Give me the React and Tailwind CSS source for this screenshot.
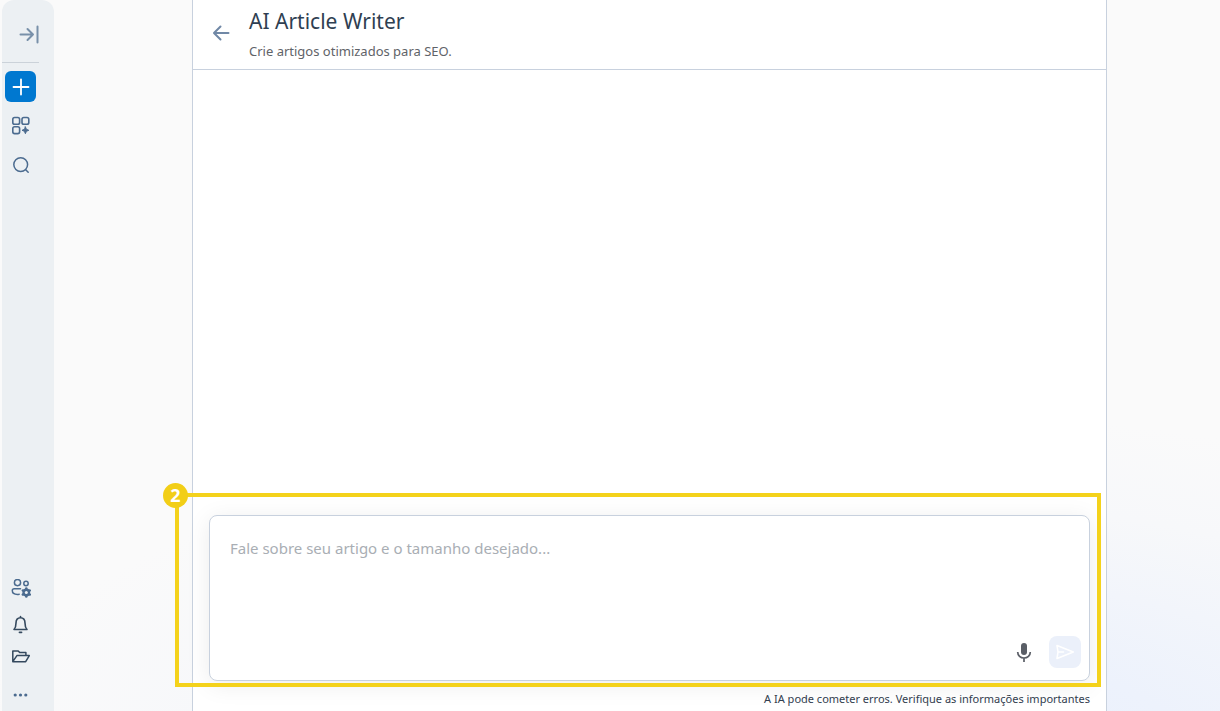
import { useState } from 'react';

const Icon = ({ children, className = 'size-5', viewBox = '0 0 20 20', strokeWidth = 1.5 }) => (
  <svg
    className={className}
    viewBox={viewBox}
    fill="none"
    stroke="currentColor"
    strokeWidth={strokeWidth}
    strokeLinecap="round"
    strokeLinejoin="round"
    aria-hidden="true"
  >
    {children}
  </svg>
);

const ExpandIcon = () => (
  <Icon strokeWidth={2}>
    <path d="M1.5 10.500h12.500M8.500 5l5.500 5.500L8.500 16M18.500 2.500v16" />
  </Icon>
);

const AppsIcon = () => (
  <Icon strokeWidth={1.6}>
    <rect x="1.800" y="1.500" width="6.800" height="6.800" rx="1.800" />
    <rect x="11" y="1.500" width="6.800" height="6.800" rx="1.800" />
    <rect x="1.800" y="10.800" width="6.800" height="6.800" rx="1.800" />
    <path d="M14.400 10.900l1 2.400 2.400 1-2.400 1-1 2.400-1-2.400-2.400-1 2.400-1z" fill="currentColor" strokeWidth="1" />
  </Icon>
);

const SearchIcon = () => (
  <Icon>
    <circle cx="9.700" cy="8.600" r="6.900" />
    <path d="M14.700 13.700l2.500 2.600" />
  </Icon>
);

const TeamIcon = () => (
  <Icon>
    <circle cx="6.500" cy="3.600" r="3.100" />
    <circle cx="15" cy="4.500" r="2.200" />
    <path d="M9.500 9.700H3.200c-1.200 0-1.900.7-1.900 1.800 0 2.600 2.200 3.900 5.200 3.900.6 0 1.200-.1 1.700-.2" />
    <path
      d="M15.300 9.600v7.800M11.900 11.500l6.800 4M18.700 11.500l-6.800 4"
      strokeWidth="2.600"
    />
    <circle cx="15.300" cy="13.500" r="2.700" strokeWidth="2.400" />
    <circle cx="15.300" cy="13.500" r="1.500" fill="#ecf0f3" stroke="none" />
  </Icon>
);

const BellIcon = () => (
  <Icon strokeWidth={1.6}>
    <path d="M9.500 1.500v1M3 14.500c1.500-1.500 2-3.200 2-6.500 0-3.400 1.800-5.300 4.500-5.300S14 4.600 14 8c0 3.300.5 5 2 6.500z" />
    <path d="M8.500 17.300h2" strokeWidth="1.800" />
  </Icon>
);

const FolderIcon = () => (
  <Icon>
    <path d="M1.800 14.700V3.900h5.400l1.500 1.700h6.200v3M1.800 14.700h12.900l3.600-6.100H5.900z" />
  </Icon>
);

const MoreIcon = () => (
  <Icon>
    <g fill="currentColor" stroke="none">
      <circle cx="4.200" cy="10" r="1.600" />
      <circle cx="9.500" cy="10" r="1.600" />
      <circle cx="14.800" cy="10" r="1.600" />
    </g>
  </Icon>
);

function Sidebar() {
  return (
    <aside className="ml-0.5 flex w-[52px] shrink-0 flex-col rounded-t-xl bg-[#ecf0f3] text-[#4b6b8f]">
      <div className="flex w-[37px] items-center justify-end border-b border-[#cbd2d9] pt-6 pb-[18px]">
        <button type="button" aria-label="Expandir menu" className="text-[#7890a9]">
          <ExpandIcon />
        </button>
      </div>

      <nav className="flex w-[37px] flex-1 flex-col items-center pt-2 pb-1.5">
        <button
          type="button"
          aria-label="Novo"
          className="flex size-[31px] items-center justify-center rounded-md bg-[#0078d0] text-white"
        >
          <Icon strokeWidth={1.800}>
            <path d="M10 2.500v15M2.500 10h15" />
          </Icon>
        </button>
        <button type="button" aria-label="Aplicativos" className="mt-3.5">
          <AppsIcon />
        </button>
        <button type="button" aria-label="Buscar" className="mt-5">
          <SearchIcon />
        </button>

        <button type="button" aria-label="Equipe" className="mt-auto">
          <TeamIcon />
        </button>
        <button type="button" aria-label="Notificações" className="mt-4 text-[#34495e]">
          <BellIcon />
        </button>
        <button type="button" aria-label="Arquivos" className="mt-3 text-[#34495e]">
          <FolderIcon />
        </button>
        <button type="button" aria-label="Mais" className="mt-[18px]">
          <MoreIcon />
        </button>
      </nav>
    </aside>
  );
}

function Composer() {
  const [prompt, setPrompt] = useState('');

  return (
    <form className="relative" onSubmit={(e) => e.preventDefault()}>
      <div className="flex h-[166px] flex-col rounded-lg border border-[#c8d1de] bg-white pt-5 pr-2 pb-3 pl-5 shadow-[0_4px_24px_rgba(0,0,0,0.08)]">
        <textarea
          aria-label="Fale sobre seu artigo"
          placeholder="Fale sobre seu artigo e o tamanho desejado..."
          value={prompt}
          onChange={(e) => setPrompt(e.target.value)}
          className="w-full flex-1 resize-none text-[15px] leading-6 text-[#2c3e50] outline-none placeholder:text-[#a9aeb4]"
        />
        <div className="flex items-center justify-end gap-3.5">
          <button type="button" aria-label="Ditar" className="text-[#5a5e66]">
            <Icon className="size-[22px]" viewBox="0 0 22 22" strokeWidth={1.700}>
              <rect x="8" y="2" width="6" height="12" rx="3" fill="currentColor" stroke="none" />
              <path d="M4.700 11c0 3.500 2.800 6 6.300 6s6.300-2.500 6.300-6M11 17v4" strokeLinecap="butt" />
            </Icon>
          </button>
          <button
            type="submit"
            aria-label="Enviar"
            className="flex size-8 items-center justify-center rounded-lg bg-[#ebf0fa] text-white"
          >
            <Icon strokeWidth={1.600}>
              <path d="M2 3.500 18.300 10 2 16.500l1-6.500zM3 10h5.500" />
            </Icon>
          </button>
        </div>
      </div>

      {/* Step highlight */}
      <div className="pointer-events-none absolute -top-[22px] -right-[11px] -bottom-1.5 -left-[34px] border-4 border-[#f4d21b]">
        <span className="absolute -top-3.5 -left-4 flex size-[25px] items-center justify-center rounded-full bg-[#f2ce16] pb-0.5 text-[18px] leading-5 font-bold text-white">
          2
        </span>
      </div>
    </form>
  );
}

function App() {
  return (
    <div className="flex h-screen bg-[#fafafa] bg-[radial-gradient(ellipse_75%_50%_at_72%_108%,#e8effd_0%,#edf2fc_35%,#f7f8fa_75%,#fafafa_100%)] font-['Noto_Sans',sans-serif]">
      <Sidebar />

      <main className="mr-[113px] ml-[138px] flex min-w-0 flex-1 flex-col border-x border-[#c8d1de] bg-white">
        <header className="flex h-[70px] shrink-0 items-center gap-[18px] border-b border-[#c8d1de] pb-1 pl-[18px]">
          <button type="button" aria-label="Voltar" className="text-[#7088a6]">
            <Icon strokeWidth={2}>
              <path d="M17.500 10H3.500M9.500 3.500 3 10l6.500 6.500" />
            </Icon>
          </button>
          <div className="pt-1">
            <h1 className="text-[21px] leading-8 text-[#2f3f52]">AI Article Writer</h1>
            <p className="text-[13px] leading-7 text-[#5f6368]">Crie artigos otimizados para SEO.</p>
          </div>
        </header>

        <section className="flex-1" />

        <div className="px-4 pb-0.5">
          <Composer />
          <p className="pt-2 text-right text-[11px] leading-5 text-[#33404f]">
            A IA pode cometer erros. Verifique as informações importantes
          </p>
        </div>
      </main>
    </div>
  );
}

export default App;
